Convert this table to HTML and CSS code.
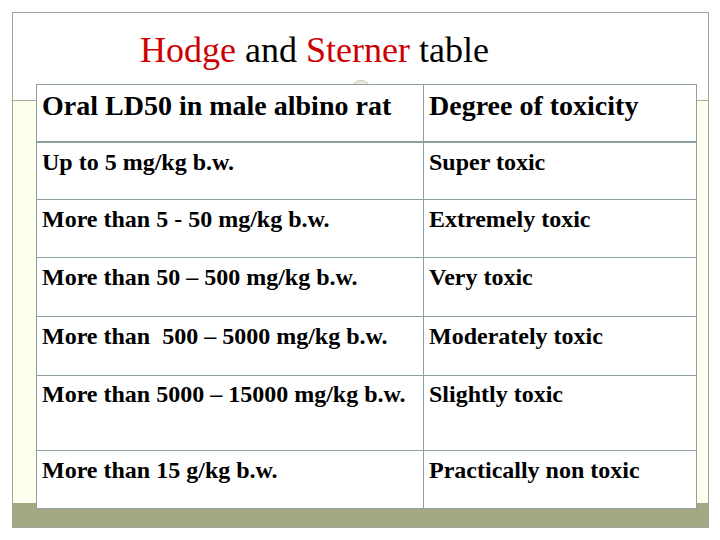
FILE: index.html
```html
<!DOCTYPE html>
<html>
<head>
<meta charset="utf-8">
<link rel="stylesheet" href="styles.css">
</head>
<body>
<div class="slide">
  <h1 class="title"><span class="red">Hodge</span> and <span class="red">Sterner</span> table</h1>
  <div class="ornament"></div>
  <table class="tox">
    <thead>
      <tr class="head"><th class="c1">Oral LD50 in male albino rat</th><th class="c2">Degree of toxicity</th></tr>
    </thead>
    <tbody>
      <tr class="r"><td>Up to 5 mg/kg b.w.</td><td>Super toxic</td></tr>
      <tr class="r"><td>More than 5 - 50 mg/kg b.w.</td><td>Extremely toxic</td></tr>
      <tr class="r r59"><td>More than 50 – 500 mg/kg b.w.</td><td>Very toxic</td></tr>
      <tr class="r r59"><td>More than&nbsp; 500 – 5000 mg/kg b.w.</td><td>Moderately toxic</td></tr>
      <tr class="r tall"><td>More than 5000 – 15000 mg/kg b.w.</td><td>Slightly toxic</td></tr>
      <tr class="r"><td>More than 15 g/kg b.w.</td><td>Practically non toxic</td></tr>
    </tbody>
  </table>
</div>
</body>
</html>
```

FILE: styles.css
```css
html, body {
  margin: 0;
  padding: 0;
  background: #ffffff;
}
body {
  width: 720px;
  height: 540px;
  overflow: hidden;
  font-family: "Liberation Serif", "Times New Roman", serif;
  color: #000;
}
.slide {
  position: relative;
  margin: 12px 0 0 12px;
  width: 695px;
  height: 514px;
  border: 1px solid #a2a596;
  background: linear-gradient(to bottom,
    #ffffff 0, #ffffff 87px,
    #a9ae9c 87px, #a9ae9c 88px,
    #fffff0 88px, #fffff0 490px,
    #a4a883 490px, #a4a883 100%);
  display: flex;
  flex-direction: column;
}
.title {
  margin: 0;
  padding: 19px 0 0 127px;
  font-size: 36px;
  line-height: 36px;
  font-weight: normal;
  height: 36px;
}
.red { color: #cc0000; }
.ornament {
  position: absolute;
  left: 338px;
  top: 67px;
  width: 18px;
  height: 18px;
  border-radius: 50%;
  border: 1px solid #c4c4b4;
  background: #ecece2;
}
.tox {
  position: relative;
  margin: 16px 0 0 23px;
  width: 661px;
  border-collapse: collapse;
  table-layout: fixed;
  background: #ffffff;
}
.tox th, .tox td {
  border: 1px solid #8e9f9f;
  vertical-align: top;
  text-align: left;
  padding: 0 0 0 5px;
  font-weight: bold;
}
.tox th {
  font-size: 28px;
  line-height: 32px;
  height: 57px;
  padding-top: 5px;
  box-sizing: border-box;
  border-bottom: 2px solid #8e9f9f;
}
.tox .c1 { width: 387px; }
.tox td {
  font-size: 24px;
  line-height: 28px;
  padding-top: 5px;
  height: 58px;
  box-sizing: border-box;
  white-space: nowrap;
}
.tox .r59 td { height: 59px; }
.tox .tall td { height: 75px; padding-top: 4px; }
```
